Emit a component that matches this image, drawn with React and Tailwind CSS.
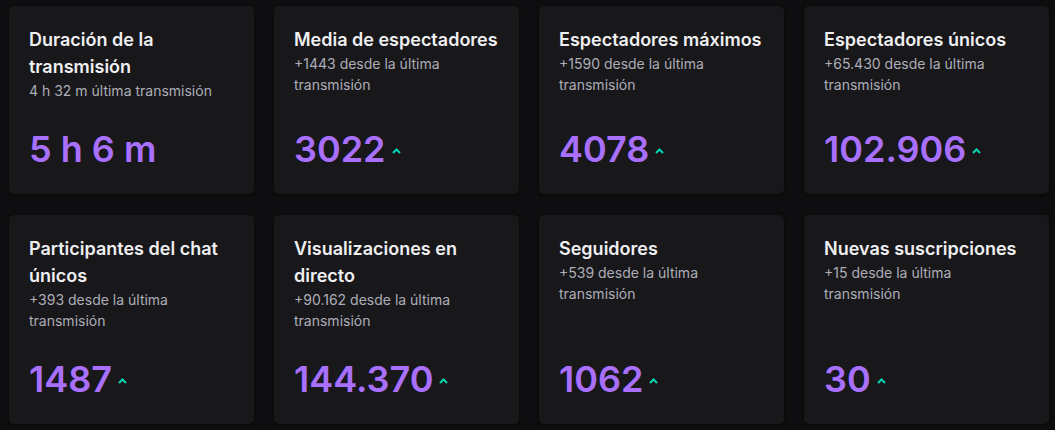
import React from 'react';

const stats = [
  { title: 'Duración de la transmisión', sub: '4 h 32 m última transmisión', value: '5 h 6 m', arrow: false },
  { title: 'Media de espectadores', sub: '+1443 desde la última transmisión', value: '3022', arrow: true },
  { title: 'Espectadores máximos', sub: '+1590 desde la última transmisión', value: '4078', arrow: true },
  { title: 'Espectadores únicos', sub: '+65.430 desde la última transmisión', value: '102.906', arrow: true },
  { title: 'Participantes del chat únicos', sub: '+393 desde la última transmisión', value: '1487', arrow: true },
  { title: 'Visualizaciones en directo', sub: '+90.162 desde la última transmisión', value: '144.370', arrow: true },
  { title: 'Seguidores', sub: '+539 desde la última transmisión', value: '1062', arrow: true },
  { title: 'Nuevas suscripciones', sub: '+15 desde la última transmisión', value: '30', arrow: true },
];

const UpArrow = () => (
  <svg width="9" height="6" viewBox="0 0 9 6" className="ml-[6px] mt-[4px]">
    <path d="M1 5 L4.5 1.5 L8 5" fill="none" stroke="#00d6b4" strokeWidth="2" />
  </svg>
);

const StatCard = ({ title, sub, value, arrow }) => (
  <div className="flex flex-col justify-between rounded-[5px] bg-[#18181b] pl-[20px] pr-[18px] pt-[20px] pb-[23px] shadow-[0_1px_3px_rgba(0,0,0,0.6)]">
    <div>
      <h3 className="text-[18px] font-semibold leading-[27px] text-[#efeff1]">{title}</h3>
      <p className="pr-[4px] text-[14px] leading-[21px] text-[#adadb8]">{sub}</p>
    </div>
    <div className="flex items-center mt-[26px]">
      <span className="text-[36px] font-semibold leading-[44px] text-[#a970ff]">{value}</span>
      {arrow && <UpArrow />}
    </div>
  </div>
);

export default function App() {
  return (
    <div className="min-h-[430px] bg-[#0e0e10] pl-[9px] pr-[6px] pt-[6px] font-['Inter',sans-serif]">
      <div className="grid grid-cols-4 gap-x-[20px] gap-y-[21px]">
        {stats.map((s, i) => (
          <StatCard key={i} {...s} />
        ))}
      </div>
    </div>
  );
}
